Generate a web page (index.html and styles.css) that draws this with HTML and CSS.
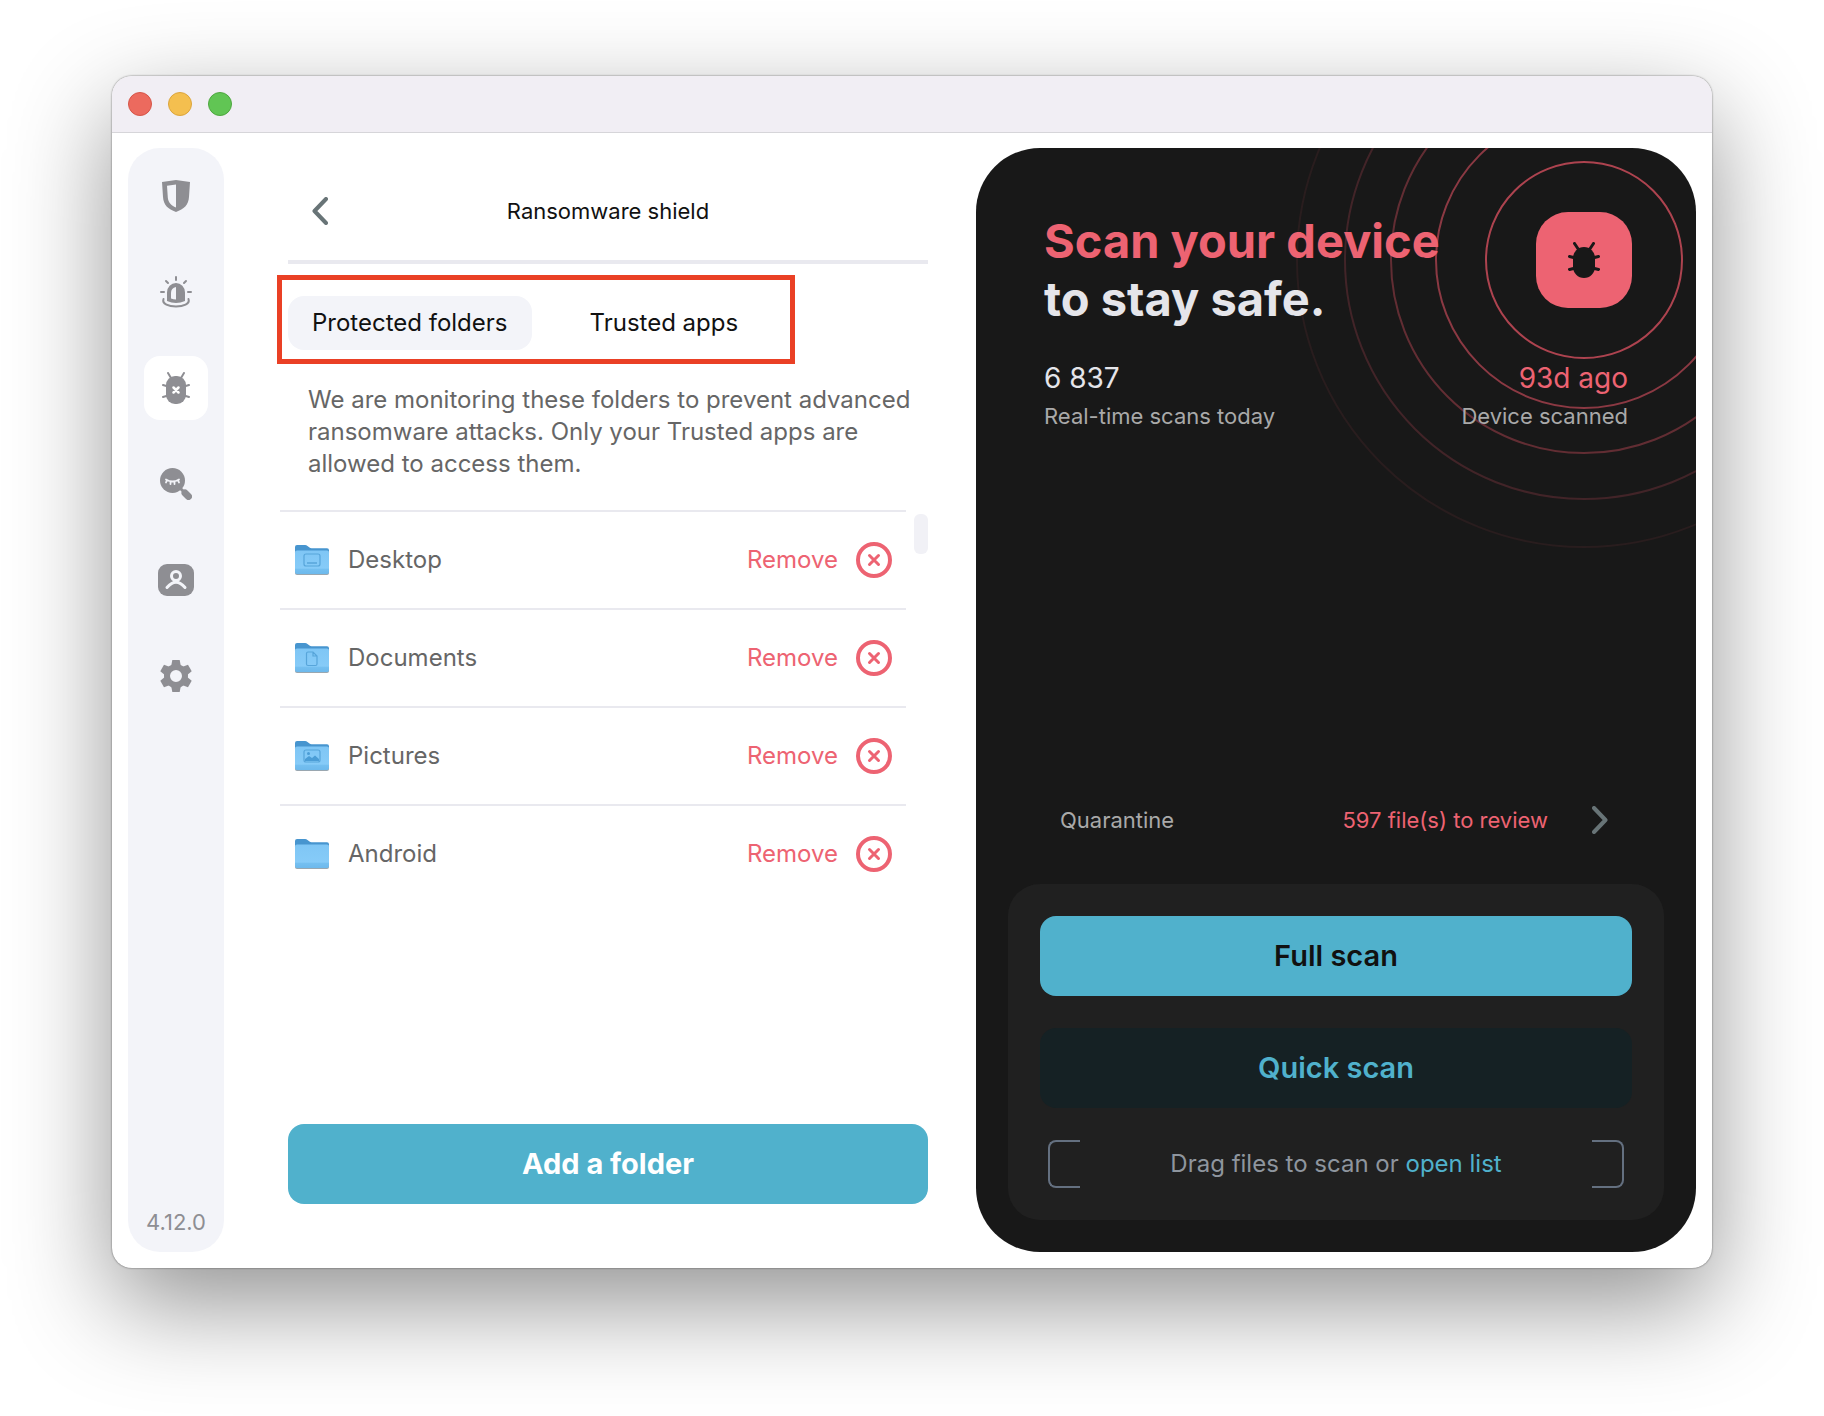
FILE: index.html
```
<!DOCTYPE html>
<html lang="en">

<head>

<meta charset="utf-8">
<meta name="viewport" content="width=device-width, initial-scale=1.0">
<title>Ransomware shield</title>

<link rel="stylesheet" href="styles.css">

</head>

<body>

<!-- shared drawings -->
<svg width="0" height="0" class="defs" aria-hidden="true">
	<defs>
		<linearGradient id="folderFront" x1="0" y1="0" x2="0" y2="1">
			<stop offset="0" stop-color="#7fc6f5"/>
			<stop offset="0.75" stop-color="#86cbf8"/>
			<stop offset="0.8" stop-color="#74bff0"/>
			<stop offset="1" stop-color="#6db9ec"/>
		</linearGradient>
		<symbol id="folder" viewBox="0 0 36 32">
			<path d="M1 30V3q0-2 2-2h8q1.500 0 2.500 1l2 1.600q.8.600 2 .6h15.500q2 0 2 2V12H1z" fill="#4795cf"/>
			<rect x="1" y="7" width="34" height="24" rx="2" fill="#9aa7b0"/>
			<rect x="1" y="6.500" width="34" height="23.500" rx="2" fill="url(#folderFront)"/>
		</symbol>
		<symbol id="cross" viewBox="0 0 36 36">
			<circle cx="18" cy="18" r="16" fill="none" stroke="#ed6372" stroke-width="4"/>
			<path d="M13.500 13.500l9 9M22.500 13.500l-9 9" stroke="#ed6372" stroke-width="3" stroke-linecap="round"/>
		</symbol>
		<symbol id="bug" viewBox="0 0 32 36">
			<rect x="5" y="5" width="22" height="31" rx="11"/>
			<path d="M6.500 1.500l4 6M25.500 1.500l-4 6M1.500 14.500l6 1.500M30.500 14.500l-6 1.500M1.500 27.500l6-1.500M30.500 27.500l-6-1.500" fill="none" stroke="currentColor" stroke-width="3" stroke-linecap="round"/>
		</symbol>
	</defs>
</svg>

<div class="window">
	<div class="titlebar">
		<button type="button" class="light red" aria-label="Close"></button>
		<button type="button" class="light yellow" aria-label="Minimize"></button>
		<button type="button" class="light green" aria-label="Zoom"></button>
	</div>

	<div class="content">
		<nav class="sidebar">
			<button type="button" aria-label="Protection">
				<svg width="28" height="32" viewBox="0 0 28 32">
					<path fill-rule="evenodd" d="M14 0L28 2l-1 15c-.5 8-5 12-13 15C6 29 1.500 25 1 17L0 2zM14 4.500L5 5.800l.8 11.700c.4 5 3.200 7.800 8.200 10z" fill="#8e8e93"/>
				</svg>
			</button>
			<button type="button" aria-label="Alerts">
				<svg width="32" height="32" viewBox="0 0 32 32">
					<path fill-rule="evenodd" d="M7 25V16.500a9 9.500 0 0 1 18 0V25q-9 4-18 0zM16 11q-5 1-5 6v5.500q2.500 1 5 1z" fill="#8e8e93"/>
					<path d="M16 1v3M6 5l2 2M26 5l-2 2M1 16h3M28 16h3M3.500 23C0 33 32 33 28.500 23" fill="none" stroke="#8e8e93" stroke-width="2" stroke-linecap="round"/>
				</svg>
			</button>
			<button type="button" class="active" aria-label="Ransomware">
				<svg width="28" height="32" viewBox="0 0 28 32">
					<rect x="4" y="4" width="20" height="28" rx="9" fill="#8e8e93"/>
					<path d="M6 1l3 5M22 1l-3 5M1 13l5 1.500M27 13l-5 1.500M1 25l5-1.500M27 25l-5-1.500" stroke="#8e8e93" stroke-width="2" stroke-linecap="round"/>
					<path d="M11.500 15.500l5 5M16.500 15.500l-5 5" stroke="#fff" stroke-width="2.500" stroke-linecap="round"/>
				</svg>
			</button>
			<button type="button" aria-label="Web shield">
				<svg width="32" height="32" viewBox="0 0 32 32">
					<circle cx="12.500" cy="12.500" r="12.500" fill="#8e8e93"/>
					<path d="M20.500 20.500l3 3" stroke="#8e8e93" stroke-width="3"/>
					<path d="M25 25l3.500 3.500" stroke="#8e8e93" stroke-width="7" stroke-linecap="round"/>
					<path d="M6 11.500q6.500 4 13 0M7 12l-1 2.500M10.500 13.500v2.500M14.500 13.500v2.500M18 12l1 2.500" fill="none" stroke="#f3f4f9" stroke-width="1.800" stroke-linecap="round"/>
				</svg>
			</button>
			<button type="button" aria-label="Account">
				<svg width="36" height="32" viewBox="0 0 36 32">
					<rect width="36" height="32" rx="9" fill="#8e8e93"/>
					<circle cx="18" cy="12" r="4.500" fill="none" stroke="#f3f4f9" stroke-width="3"/>
					<path d="M9 23.500q9-10.500 18 0" fill="none" stroke="#f3f4f9" stroke-width="3" stroke-linecap="round"/>
				</svg>
			</button>
			<button type="button" aria-label="Settings">
				<svg width="32" height="32" viewBox="0 0 32 32">
					<g fill="#8e8e93">
						<path id="tooth" d="M12.300 0h7.400l1.300 7h-10z"/>
						<use href="#tooth" transform="rotate(60 16 16)"/>
						<use href="#tooth" transform="rotate(120 16 16)"/>
						<use href="#tooth" transform="rotate(180 16 16)"/>
						<use href="#tooth" transform="rotate(240 16 16)"/>
						<use href="#tooth" transform="rotate(300 16 16)"/>
					</g>
					<circle cx="16" cy="16" r="9" fill="none" stroke="#8e8e93" stroke-width="6"/>
				</svg>
			</button>
			<div class="version">4.12.0</div>
		</nav>

		<main class="shield">
			<header>
				<button type="button" class="back" aria-label="Back">
					<svg width="16" height="28" viewBox="0 0 16 28">
						<path d="M14 2L2.500 14 14 26" fill="none" stroke="#687477" stroke-width="4" stroke-linecap="round" stroke-linejoin="round"/>
					</svg>
				</button>
				<h1>Ransomware shield</h1>
			</header>

			<div class="tabs">
				<button type="button" class="selected">Protected folders</button>
				<button type="button">Trusted apps</button>
			</div>

			<p>We are monitoring these folders to prevent advanced ransomware attacks. Only your Trusted apps are allowed to access them.</p>

			<div class="folders">
				<ul>
					<li>
						<svg class="folder" viewBox="0 0 36 32">
							<use href="#folder"/>
							<g fill="none" stroke="#57a5da" stroke-width="1.200">
								<rect x="10" y="10" width="16" height="12" rx="2"/>
								<path d="M13 19h10" stroke-width="1.500"/>
							</g>
						</svg>
						<span>Desktop</span>
						<button type="button">Remove <svg width="36" height="36"><use href="#cross"/></svg></button>
					</li>
					<li>
						<svg class="folder" viewBox="0 0 36 32">
							<use href="#folder"/>
							<path d="M14 10h5l4 4v8q0 1.500-1.500 1.500h-7.500q-1.500 0-1.500-1.500v-10.500q0-1.500 1.500-1.500zM19 10v4h4" fill="none" stroke="#57a5da" stroke-width="1.200"/>
						</svg>
						<span>Documents</span>
						<button type="button">Remove <svg width="36" height="36"><use href="#cross"/></svg></button>
					</li>
					<li>
						<svg class="folder" viewBox="0 0 36 32">
							<use href="#folder"/>
							<rect x="10" y="10" width="16" height="12" rx="2" fill="none" stroke="#57a5da" stroke-width="1.200"/>
							<path d="M11 21v-2l4-3 3 2 3-2.500 4 3.500v2z" fill="#4b9dd6"/>
							<circle cx="14.500" cy="13.500" r="1.500" fill="#4b9dd6"/>
						</svg>
						<span>Pictures</span>
						<button type="button">Remove <svg width="36" height="36"><use href="#cross"/></svg></button>
					</li>
					<li>
						<svg class="folder" viewBox="0 0 36 32"><use href="#folder"/></svg>
						<span>Android</span>
						<button type="button">Remove <svg width="36" height="36"><use href="#cross"/></svg></button>
					</li>
				</ul>
				<div class="thumb"></div>
			</div>

			<button type="button" class="big add">Add a folder</button>
		</main>

		<section class="scan">
			<svg class="rings" width="576" height="576" viewBox="0 0 576 576" fill="none" stroke="#ed5567" stroke-width="2">
				<circle cx="288" cy="288" r="98" stroke-opacity="0.700"/>
				<circle cx="288" cy="288" r="148" stroke-opacity="0.540"/>
				<circle cx="288" cy="288" r="193" stroke-opacity="0.350"/>
				<circle cx="288" cy="288" r="239" stroke-opacity="0.200"/>
				<circle cx="288" cy="288" r="287" stroke-opacity="0.080"/>
			</svg>

			<div class="top">
				<h2><em>Scan your device</em><br>to stay safe.</h2>
				<div class="badge">
					<svg width="32" height="36" color="#181818" fill="#181818"><use href="#bug"/></svg>
				</div>
			</div>

			<div class="stats">
				<div>
					<strong>6 837</strong>
					<span>Real-time scans today</span>
				</div>
				<div class="right">
					<strong>93d ago</strong>
					<span>Device scanned</span>
				</div>
			</div>

			<button type="button" class="quarantine">
				<span class="label">Quarantine</span>
				<span class="count">597 file(s) to review</span>
				<svg width="16" height="28" viewBox="0 0 16 28">
					<path d="M2 2l11.500 12L2 26" fill="none" stroke="#687477" stroke-width="4" stroke-linecap="round" stroke-linejoin="round"/>
				</svg>
			</button>

			<div class="card">
				<button type="button" class="big full">Full scan</button>
				<button type="button" class="big quick">Quick scan</button>
				<div class="drop">Drag files to scan or&nbsp;<a href="#">open list</a></div>
			</div>
		</section>
	</div>
</div>

</body>

</html>
```

FILE: styles.css
```
*,
*::before,
*::after {
	box-sizing: border-box;
}

body {
	display: flex;
	min-height: 100vh;
	margin: 0;
	padding: 76px 112px 148px;
	background-color: #fff;
	font-family: Inter, "Liberation Sans", sans-serif;
	font-size: 24px;
	line-height: 32px;
	color: #666;
}

button {
	margin: 0;
	padding: 0;
	border: 0;
	background: none;
	font: inherit;
	color: inherit;
	cursor: pointer;
}

svg {
	display: block;
}

.defs {
	position: absolute;
}

.window {
	display: flex;
	flex-direction: column;
	flex: 1;
	border-radius: 20px;
	background-color: #fff;
	box-shadow: 0 0 2px rgba(0, 0, 0, 0.6), 0 36px 100px rgba(0, 0, 0, 0.43);
}

.titlebar {
	display: flex;
	align-items: center;
	gap: 16px;
	height: 57px;
	padding: 0 16px;
	border-bottom: 1px solid #d6d5d9;
	border-radius: 20px 20px 0 0;
	background-color: #f1eef4;
}

.light {
	width: 24px;
	height: 24px;
	border: 1px solid;
	border-radius: 12px;
}

.red {
	border-color: #d65548;
	background-color: #ec6a5e;
}

.yellow {
	border-color: #dca53c;
	background-color: #f4bf4f;
}

.green {
	border-color: #4ea73f;
	background-color: #61c554;
}

.content {
	display: grid;
	grid-template-columns: 96px 41fr 45fr;
	column-gap: 48px;
	flex: 1;
	padding: 15px 16px 16px;
}

/* left icons */

.sidebar {
	display: flex;
	flex-direction: column;
	align-items: center;
	gap: 32px;
	padding: 16px 0;
	border-radius: 32px;
	background-color: #f3f4f9;
}

.sidebar button {
	display: flex;
	align-items: center;
	justify-content: center;
	width: 64px;
	height: 64px;
	border-radius: 16px;
}

.sidebar .active {
	background-color: #fff;
}

.version {
	margin-top: auto;
	margin-bottom: -2px;
	font-size: 22px;
	color: #8e8e93;
}

/* folder list */

.shield {
	display: flex;
	flex-direction: column;
	padding: 0 0 48px 16px;
}

.shield header {
	display: flex;
	align-items: center;
	height: 116px;
	padding: 14px 24px 0;
	border-bottom: 4px solid #e9e9ef;
}

.shield h1 {
	flex: 1;
	margin: 0 16px 0 0;
	font-size: 22px;
	font-weight: 400;
	text-align: center;
	color: #111;
}

.tabs {
	display: flex;
	align-self: flex-start;
	gap: 34px;
	margin: 11px 0 0 -11px;
	padding: 16px 28px 9px 6px;
	border: 5px solid #ea4025;
	color: #111;
}

.tabs button {
	height: 54px;
	padding: 0 24px;
	border-radius: 16px;
}

.tabs .selected {
	background-color: #f3f4f9;
}

.shield p {
	margin: 20px 0 30px 20px;
}

.folders {
	display: flex;
	justify-content: space-between;
	margin-left: -8px;
}

.folders ul {
	flex: 1;
	margin: 0 8px 0 0;
	padding: 0;
	list-style: none;
}

.folders li {
	display: flex;
	align-items: center;
	height: 98px;
	padding: 0 14px;
	border-top: 2px solid #e9e9ef;
}

.folder {
	width: 36px;
	height: 32px;
	margin-right: 18px;
}

.folders span {
	flex: 1;
}

.folders button {
	display: flex;
	align-items: center;
	gap: 18px;
	color: #ed6372;
}

.thumb {
	width: 14px;
	height: 40px;
	margin-top: 4px;
	border-radius: 6px;
	background-color: #f1f1f6;
}

.big {
	width: 100%;
	height: 80px;
	border-radius: 16px;
	font-size: 29px;
	font-weight: 600;
	background-color: #50b1cc;
}

.add {
	margin-top: auto;
	font-weight: 700;
	color: #fff;
}

/* dark panel */

.scan {
	position: relative;
	display: flex;
	flex-direction: column;
	padding: 64px 32px 32px;
	border-radius: 64px;
	background-color: #181818;
	overflow: hidden;
}

.rings {
	position: absolute;
	top: -176px;
	right: -176px;
}

.top,
.stats,
.quarantine {
	position: relative;
	display: flex;
	justify-content: space-between;
}

.top {
	padding: 0 32px 0 36px;
}

.scan h2 {
	margin: 0;
	font-size: 47px;
	line-height: 58px;
	color: #e5e5ea;
}

.scan em {
	font-style: normal;
	color: #ed6372;
}

.badge {
	display: flex;
	align-items: center;
	justify-content: center;
	width: 96px;
	height: 96px;
	border-radius: 32px;
	background-color: #ed6372;
}

.stats {
	margin-top: 32px;
	padding: 0 36px;
	font-size: 22px;
	color: #a9a9a9;
}

.stats strong {
	display: block;
	margin-bottom: 4px;
	font-size: 28px;
	font-weight: 400;
	line-height: 36px;
	color: #e5e5ea;
}

.right {
	text-align: right;
}

.stats .right strong {
	color: #ed6372;
}

.quarantine {
	align-items: center;
	margin: auto 0 48px;
	padding: 0 56px 0 52px;
	font-size: 22px;
	color: #a9a9a9;
}

.count {
	margin: 0 44px 0 auto;
	color: #ed6372;
}

.card {
	display: flex;
	flex-direction: column;
	gap: 32px;
	padding: 32px;
	border-radius: 32px;
	background-color: #202020;
}

.full {
	color: #111;
}

.quick {
	background-color: #152124;
	color: #50b1cc;
}

.drop {
	display: flex;
	align-items: center;
	justify-content: center;
	height: 48px;
	margin: 0 8px;
	color: #8e959e;
}

.drop::before,
.drop::after {
	content: "";
	width: 32px;
	height: 48px;
	border: 2px solid #647080;
}

.drop::before {
	margin-right: auto;
	border-right: 0;
	border-radius: 8px 0 0 8px;
}

.drop::after {
	margin-left: auto;
	border-left: 0;
	border-radius: 0 8px 8px 0;
}

.drop a {
	color: #50b1cc;
	text-decoration: none;
}
```
